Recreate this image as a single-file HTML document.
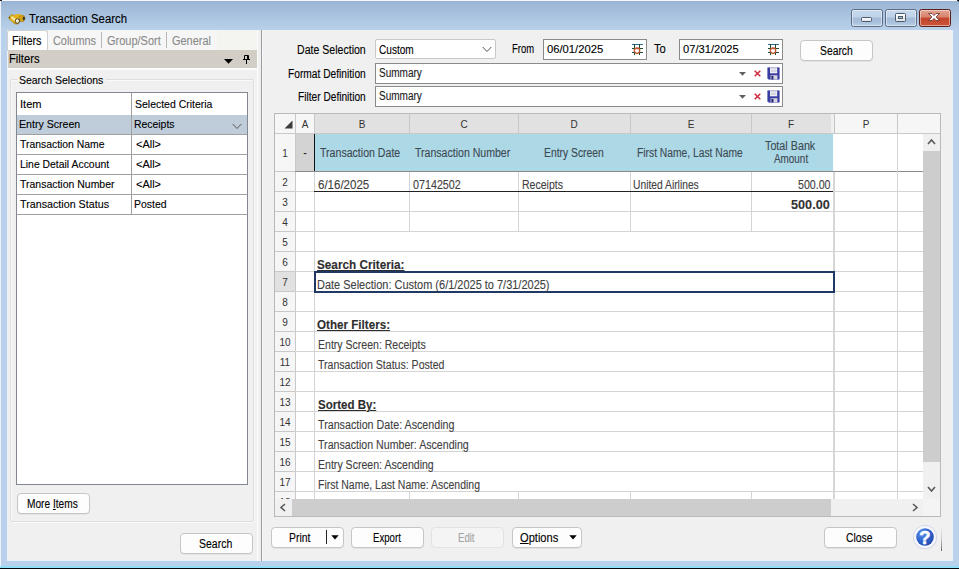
<!DOCTYPE html><html><head><meta charset="utf-8"><title>Transaction Search</title><style>html,body{margin:0;padding:0;}
body{width:959px;height:569px;position:relative;overflow:hidden;background:#bfd3ec;font-family:"Liberation Sans", sans-serif;}
#w div{position:absolute;}
.t u{text-decoration:underline;text-decoration-thickness:1px;text-underline-offset:1px;}
.p{display:inline-block;width:0;height:0;vertical-align:baseline;}
.t{-webkit-text-stroke:0.12px currentColor;position:absolute;white-space:pre;line-height:20px;height:20px;transform-origin:0 50%;font-family:"Liberation Sans", sans-serif;}
</style></head><body><div id="w"><div class="" style="left:0px;top:0px;width:959px;height:569px;background:linear-gradient(#9ab5d4 1px,#b9d1ea 30px,#b9d1ea 100%);"></div>
<div class="" style="left:0px;top:0px;width:959px;height:1px;background:#f4f8fc;"></div>
<div class="" style="left:0px;top:0px;width:2px;height:1px;background:#1a2028;"></div>
<div class="" style="left:0px;top:1px;width:1px;height:1px;background:#4a5868;"></div>
<div class="" style="left:957px;top:0px;width:2px;height:1px;background:#1a2028;"></div>
<div class="" style="left:958px;top:1px;width:1px;height:1px;background:#4a5868;"></div>
<div class="" style="left:0px;top:1px;width:1px;height:565px;background:#eef4fb;"></div>
<div class="" style="left:0px;top:566px;width:959px;height:2px;background:#8fe0f8;"></div>
<div class="" style="left:0px;top:568px;width:959px;height:1px;background:#05080a;"></div>
<div class="" style="left:7px;top:30px;width:946px;height:531px;background:#f0f0f0;box-shadow:inset 1px 0 0 #eaf2fb, inset -1px -1px 0 #eaf2fb;"></div>
<svg style="position:absolute;left:8px;top:13px" width="18" height="12" viewBox="0 0 18 12">
<path d="M0.8 4 L3.8 1.3 L12 7 L9.5 11.2 L6.2 10.6 L1 5.8 Z" fill="#e2ae1c" stroke="#a67c12" stroke-width="0.6"/>
<path d="M2.4 4.2 L4.6 3.2 L8.6 6.6 L6.6 8.6 Z" fill="#f8e89a"/>
<ellipse cx="10.2" cy="3.3" rx="4.4" ry="2.2" fill="#e6b21a"/>
<path d="M11 3.2 L16 2.4 L17.2 5.4 L15.2 8.8 L12.2 8.2 Z" fill="#d9a414" stroke="#9a7410" stroke-width="0.5"/>
<ellipse cx="15.8" cy="5.6" rx="1.1" ry="2" fill="#3b3a22"/>
<circle cx="9.4" cy="8.1" r="2.3" fill="#d9dbc9" stroke="#5a4810" stroke-width="1"/>
<circle cx="8.9" cy="7.6" r="0.9" fill="#fff"/>
<circle cx="1.6" cy="4.6" r="0.8" fill="#6a5210"/>
</svg>
<div class="" style="left:851px;top:9px;width:32px;height:18px;background:linear-gradient(#c6d8ec 0%,#bfd2e8 45%,#a3bbd7 50%,#a8c0dc 75%,#b9cfe6 100%);border:1px solid #5d6d86;border-radius:2.5px;box-sizing:border-box;box-shadow:inset 0 0 0 1px rgba(255,255,255,.45);"></div>
<div class="" style="left:885px;top:9px;width:32px;height:18px;background:linear-gradient(#c6d8ec 0%,#bfd2e8 45%,#a3bbd7 50%,#a8c0dc 75%,#b9cfe6 100%);border:1px solid #5d6d86;border-radius:2.5px;box-sizing:border-box;box-shadow:inset 0 0 0 1px rgba(255,255,255,.45);"></div>
<div class="" style="left:919px;top:9px;width:32px;height:18px;background:linear-gradient(#e3a594 0%,#d6806a 45%,#c4452a 50%,#c9553a 100%);border:1px solid #5a2018;border-radius:2.5px;box-sizing:border-box;box-shadow:inset 0 0 0 1px rgba(255,255,255,.45);"></div>
<div class="" style="left:861px;top:17px;width:11px;height:5px;background:linear-gradient(#fff,#dfe3e8);border:1px solid #4d5a6a;box-sizing:border-box;border-radius:1.5px;"></div>
<div class="" style="left:895px;top:13px;width:11px;height:9px;background:linear-gradient(#fff,#dfe3e8);border:1px solid #4d5a6a;box-sizing:border-box;border-radius:1.5px;"></div>
<div class="" style="left:898px;top:16px;width:5px;height:3px;background:#a9c1de;border:1px solid #4d5a6a;box-sizing:border-box;"></div>
<svg style="position:absolute;left:928px;top:12.5px" width="12" height="8" viewBox="0 0 12 8">
<path d="M0.5 0.5 L4 0.5 L6 2.5 L8 0.5 L11.5 0.5 L8.1 4 L11.5 7.5 L8 7.5 L6 5.5 L4 7.5 L0.5 7.5 L3.9 4 Z" fill="#fcfcfc" stroke="#6a3028" stroke-width="0.8" stroke-linejoin="round"/></svg>
<div class="" style="left:8px;top:30px;width:249px;height:20px;background:#f4f4f0;"></div>
<div class="" style="left:48px;top:30px;width:169px;height:20px;background:#f6f6f6;"></div>
<div class="" style="left:7px;top:30px;width:41px;height:21px;background:#fff;border:1px solid #d0d0d0;border-bottom:none;border-radius:3px 3px 0 0;box-sizing:border-box;"></div>
<div class="" style="left:101px;top:32px;width:1px;height:16px;background:#b8b8b8;"></div>
<div class="" style="left:166px;top:32px;width:1px;height:16px;background:#b8b8b8;"></div>
<div class="" style="left:8px;top:50px;width:249px;height:18px;background:#d2cec5;"></div>
<div class="" style="left:8px;top:68px;width:249px;height:2px;background:#fbfbfb;"></div>
<svg style="position:absolute;left:224px;top:59px" width="9" height="5" viewBox="0 0 9 5"><path d="M0 0 L9 0 L4.5 4.8 Z" fill="#000"/></svg>
<svg style="position:absolute;left:243px;top:55px" width="7" height="9" viewBox="0 0 7 9">
<path d="M1.5 0.5 H5.5 V4.5 H1.5 Z" fill="none" stroke="#000" stroke-width="1"/><path d="M4.5 0.5V4.5" stroke="#000" stroke-width="1"/>
<path d="M0 4.5 H7" stroke="#000" stroke-width="1"/><path d="M3.5 5 V9" stroke="#000" stroke-width="1"/></svg>
<div class="" style="left:257px;top:30px;width:1px;height:531px;background:#fcfcfc;"></div>
<div class="" style="left:261px;top:30px;width:1px;height:531px;background:#9c9c9c;"></div>
<div class="" style="left:262px;top:30px;width:1px;height:531px;background:#f7f7f7;"></div>
<div class="" style="left:10px;top:79px;width:244px;height:443px;border:1px solid #dddddd;box-sizing:border-box;border-radius:2px;box-shadow:inset 1px 1px 0 #fafafa, 1px 1px 0 #fafafa;"></div>
<div class="" style="left:17px;top:72px;width:89px;height:14px;background:#f0f0f0;"></div>
<div class="" style="left:16px;top:92px;width:232px;height:393px;background:#fff;border:1px solid #828790;box-sizing:border-box;"></div>
<div class="" style="left:17px;top:115px;width:230px;height:19px;background:#bfcddb;"></div>
<div class="" style="left:17px;top:134px;width:230px;height:1px;background:#a0a0a0;"></div>
<div class="" style="left:17px;top:154px;width:230px;height:1px;background:#a0a0a0;"></div>
<div class="" style="left:17px;top:174px;width:230px;height:1px;background:#a0a0a0;"></div>
<div class="" style="left:17px;top:194px;width:230px;height:1px;background:#a0a0a0;"></div>
<div class="" style="left:17px;top:214px;width:230px;height:1px;background:#a0a0a0;"></div>
<div class="" style="left:131px;top:93px;width:1px;height:121px;background:#a0a0a0;"></div>
<svg style="position:absolute;left:232px;top:123px" width="10" height="7" viewBox="0 0 10 7"><path d="M0.7 1 L5 5.5 L9.3 1" fill="none" stroke="#555" stroke-width="1"/></svg>
<div class="" style="left:17px;top:493px;width:73px;height:21px;background:#fdfdfd;border:1px solid #c6c6c6;border-radius:4px;box-sizing:border-box;box-shadow:0 1px 0 rgba(0,0,0,.05);"></div>
<div class="" style="left:180px;top:533px;width:73px;height:21px;background:#fdfdfd;border:1px solid #c6c6c6;border-radius:4px;box-sizing:border-box;box-shadow:0 1px 0 rgba(0,0,0,.05);"></div>
<div class="" style="left:375px;top:39px;width:121px;height:20px;background:#fff;border:1px solid #c8c8c8;border-radius:2px;box-sizing:border-box;"></div>
<svg style="position:absolute;left:482px;top:46px" width="10" height="7" viewBox="0 0 10 7"><path d="M0.7 1 L5 5.5 L9.3 1" fill="none" stroke="#555" stroke-width="1"/></svg>
<div class="" style="left:543px;top:39px;width:104px;height:21px;background:#fff;border:1px solid #8a8a8a;box-sizing:border-box;"></div>
<svg style="position:absolute;left:632px;top:44px" width="11" height="11" viewBox="0 0 11 11">
<path d="M0 0.5H11" stroke="#2a6a9a" stroke-width="1"/>
<path d="M2.5 0V11M7.5 0V11" stroke="#1e4a2e" stroke-width="1"/>
<path d="M0 4.5H11M0 8.5H11" stroke="#1e4a2e" stroke-width="1"/>
<circle cx="5" cy="6.6" r="2.7" fill="#fff" stroke="#c0522c" stroke-width="1.3"/>
<path d="M3 5.2 Q5 2.2 7 5.2 Z" fill="#cf5a3a"/></svg>
<div class="" style="left:679px;top:39px;width:104px;height:21px;background:#fff;border:1px solid #8a8a8a;box-sizing:border-box;"></div>
<svg style="position:absolute;left:768px;top:44px" width="11" height="11" viewBox="0 0 11 11">
<path d="M0 0.5H11" stroke="#2a6a9a" stroke-width="1"/>
<path d="M2.5 0V11M7.5 0V11" stroke="#1e4a2e" stroke-width="1"/>
<path d="M0 4.5H11M0 8.5H11" stroke="#1e4a2e" stroke-width="1"/>
<circle cx="5" cy="6.6" r="2.7" fill="#fff" stroke="#c0522c" stroke-width="1.3"/>
<path d="M3 5.2 Q5 2.2 7 5.2 Z" fill="#cf5a3a"/></svg>
<div class="" style="left:800px;top:40px;width:73px;height:21px;background:#fdfdfd;border:1px solid #c6c6c6;border-radius:4px;box-sizing:border-box;box-shadow:0 1px 0 rgba(0,0,0,.05);"></div>
<div class="" style="left:375px;top:63px;width:408px;height:21px;background:#fff;border:1px solid #8a8a8a;box-sizing:border-box;"></div>
<svg style="position:absolute;left:739px;top:72px" width="7" height="4" viewBox="0 0 7 4"><path d="M0 0 L7 0 L3.5 3.8 Z" fill="#606060"/></svg>
<svg style="position:absolute;left:754px;top:70px" width="7" height="7" viewBox="0 0 7 7"><path d="M0.7 0.7 L6.3 6.3 M6.3 0.7 L0.7 6.3" stroke="#cf2a3e" stroke-width="1.5"/></svg>
<svg style="position:absolute;left:767px;top:67px" width="13" height="13" viewBox="0 0 13 13">
<path d="M1.2 0.5 H11.8 Q12.5 0.5 12.5 1.2 V11.8 Q12.5 12.5 11.8 12.5 H1.8 L0.5 11.2 V1.2 Q0.5 0.5 1.2 0.5 Z" fill="#3a3ca4" stroke="#7a7cc8" stroke-width="0.6"/>
<rect x="3" y="0.5" width="7.2" height="5.8" fill="#f2f2f8"/>
<path d="M3.6 1.8H9.6M3.6 3.2H9.6M3.6 4.6H9.6" stroke="#b8b8c4" stroke-width="0.6"/>
<rect x="3.6" y="8.2" width="6.8" height="4.3" fill="#d4d4de"/><rect x="4.4" y="8.8" width="2" height="3.7" fill="#23266e"/></svg>
<div class="" style="left:375px;top:86px;width:408px;height:21px;background:#fff;border:1px solid #8a8a8a;box-sizing:border-box;"></div>
<svg style="position:absolute;left:739px;top:95px" width="7" height="4" viewBox="0 0 7 4"><path d="M0 0 L7 0 L3.5 3.8 Z" fill="#606060"/></svg>
<svg style="position:absolute;left:754px;top:93px" width="7" height="7" viewBox="0 0 7 7"><path d="M0.7 0.7 L6.3 6.3 M6.3 0.7 L0.7 6.3" stroke="#cf2a3e" stroke-width="1.5"/></svg>
<svg style="position:absolute;left:767px;top:90px" width="13" height="13" viewBox="0 0 13 13">
<path d="M1.2 0.5 H11.8 Q12.5 0.5 12.5 1.2 V11.8 Q12.5 12.5 11.8 12.5 H1.8 L0.5 11.2 V1.2 Q0.5 0.5 1.2 0.5 Z" fill="#3a3ca4" stroke="#7a7cc8" stroke-width="0.6"/>
<rect x="3" y="0.5" width="7.2" height="5.8" fill="#f2f2f8"/>
<path d="M3.6 1.8H9.6M3.6 3.2H9.6M3.6 4.6H9.6" stroke="#b8b8c4" stroke-width="0.6"/>
<rect x="3.6" y="8.2" width="6.8" height="4.3" fill="#d4d4de"/><rect x="4.4" y="8.8" width="2" height="3.7" fill="#23266e"/></svg>
<div class="" style="left:274px;top:113px;width:667px;height:404px;background:#fff;border:1px solid #b9b9b9;box-sizing:border-box;"></div>
<div class="" style="left:275px;top:114px;width:664.5px;height:19px;background:#f6f6f6;"></div>
<div class="" style="left:275px;top:114px;width:20px;height:19px;background:#f6f6f6;"></div>
<div class="" style="left:295.5px;top:114px;width:18.5px;height:19px;background:#f6f6f6;"></div>
<div class="" style="left:314.5px;top:114px;width:94.0px;height:19px;background:#e1e1e1;"></div>
<div class="" style="left:409px;top:114px;width:109px;height:19px;background:#e1e1e1;"></div>
<div class="" style="left:518.5px;top:114px;width:111.5px;height:19px;background:#e1e1e1;"></div>
<div class="" style="left:630.5px;top:114px;width:120.0px;height:19px;background:#e1e1e1;"></div>
<div class="" style="left:751px;top:114px;width:80px;height:19px;background:#e1e1e1;"></div>
<div class="" style="left:835px;top:114px;width:62px;height:19px;background:#f6f6f6;"></div>
<div class="" style="left:898px;top:114px;width:42px;height:19px;background:#f6f6f6;"></div>
<div class="" style="left:295px;top:114px;width:1px;height:19px;background:#c9c9c9;"></div>
<div class="" style="left:314px;top:114px;width:1px;height:19px;background:#c9c9c9;"></div>
<div class="" style="left:408.5px;top:114px;width:1px;height:19px;background:#c9c9c9;"></div>
<div class="" style="left:518px;top:114px;width:1px;height:19px;background:#c9c9c9;"></div>
<div class="" style="left:630px;top:114px;width:1px;height:19px;background:#c9c9c9;"></div>
<div class="" style="left:750.5px;top:114px;width:1px;height:19px;background:#c9c9c9;"></div>
<div class="" style="left:897px;top:114px;width:1px;height:19px;background:#c9c9c9;"></div>
<div class="" style="left:275px;top:133px;width:664.5px;height:1px;background:#c9c9c9;"></div>
<svg style="position:absolute;left:284px;top:120px" width="9" height="9" viewBox="0 0 9 9"><path d="M8.5 0.5 V8.5 H0.5 Z" fill="#3c3c3c"/></svg>
<div class="" style="left:275px;top:134px;width:20px;height:365px;background:#f6f6f6;"></div>
<div class="" style="left:275px;top:271.5px;width:20px;height:20px;background:#e1e1e1;"></div>
<div class="" style="left:295px;top:134px;width:1px;height:365px;background:#c9c9c9;"></div>
<div class="" style="left:295.5px;top:134px;width:18.5px;height:37px;background:#d3d3d3;"></div>
<div class="" style="left:314px;top:134px;width:519px;height:37px;background:#add8e6;"></div>
<div class="" style="left:314px;top:134px;width:1px;height:37px;background:#111;"></div>
<div class="" style="left:314px;top:171px;width:1px;height:328px;background:#d4d4d4;"></div>
<div class="" style="left:275px;top:191px;width:648px;height:1px;background:#d4d4d4;"></div>
<div class="" style="left:275px;top:211px;width:648px;height:1px;background:#d4d4d4;"></div>
<div class="" style="left:275px;top:231px;width:648px;height:1px;background:#d4d4d4;"></div>
<div class="" style="left:275px;top:251px;width:648px;height:1px;background:#d4d4d4;"></div>
<div class="" style="left:275px;top:271px;width:648px;height:1px;background:#d4d4d4;"></div>
<div class="" style="left:275px;top:291px;width:648px;height:1px;background:#d4d4d4;"></div>
<div class="" style="left:275px;top:311px;width:648px;height:1px;background:#d4d4d4;"></div>
<div class="" style="left:275px;top:331px;width:648px;height:1px;background:#d4d4d4;"></div>
<div class="" style="left:275px;top:351px;width:648px;height:1px;background:#d4d4d4;"></div>
<div class="" style="left:275px;top:371px;width:648px;height:1px;background:#d4d4d4;"></div>
<div class="" style="left:275px;top:391px;width:648px;height:1px;background:#d4d4d4;"></div>
<div class="" style="left:275px;top:411px;width:648px;height:1px;background:#d4d4d4;"></div>
<div class="" style="left:275px;top:431px;width:648px;height:1px;background:#d4d4d4;"></div>
<div class="" style="left:275px;top:451px;width:648px;height:1px;background:#d4d4d4;"></div>
<div class="" style="left:275px;top:471px;width:648px;height:1px;background:#d4d4d4;"></div>
<div class="" style="left:275px;top:491px;width:648px;height:1px;background:#d4d4d4;"></div>
<div class="" style="left:275px;top:171px;width:20px;height:1px;background:#c9c9c9;"></div>
<div class="" style="left:275px;top:191px;width:20px;height:1px;background:#c9c9c9;"></div>
<div class="" style="left:275px;top:211px;width:20px;height:1px;background:#c9c9c9;"></div>
<div class="" style="left:275px;top:231px;width:20px;height:1px;background:#c9c9c9;"></div>
<div class="" style="left:275px;top:251px;width:20px;height:1px;background:#c9c9c9;"></div>
<div class="" style="left:275px;top:271px;width:20px;height:1px;background:#c9c9c9;"></div>
<div class="" style="left:275px;top:291px;width:20px;height:1px;background:#c9c9c9;"></div>
<div class="" style="left:275px;top:311px;width:20px;height:1px;background:#c9c9c9;"></div>
<div class="" style="left:275px;top:331px;width:20px;height:1px;background:#c9c9c9;"></div>
<div class="" style="left:275px;top:351px;width:20px;height:1px;background:#c9c9c9;"></div>
<div class="" style="left:275px;top:371px;width:20px;height:1px;background:#c9c9c9;"></div>
<div class="" style="left:275px;top:391px;width:20px;height:1px;background:#c9c9c9;"></div>
<div class="" style="left:275px;top:411px;width:20px;height:1px;background:#c9c9c9;"></div>
<div class="" style="left:275px;top:431px;width:20px;height:1px;background:#c9c9c9;"></div>
<div class="" style="left:275px;top:451px;width:20px;height:1px;background:#c9c9c9;"></div>
<div class="" style="left:275px;top:471px;width:20px;height:1px;background:#c9c9c9;"></div>
<div class="" style="left:275px;top:491px;width:20px;height:1px;background:#c9c9c9;"></div>
<div class="" style="left:295px;top:171px;width:628px;height:1px;background:#8a8a8a;"></div>
<div class="" style="left:408.5px;top:172px;width:1px;height:59px;background:#d4d4d4;"></div>
<div class="" style="left:408.5px;top:492px;width:1px;height:7px;background:#d4d4d4;"></div>
<div class="" style="left:518px;top:172px;width:1px;height:59px;background:#d4d4d4;"></div>
<div class="" style="left:518px;top:492px;width:1px;height:7px;background:#d4d4d4;"></div>
<div class="" style="left:630px;top:172px;width:1px;height:59px;background:#d4d4d4;"></div>
<div class="" style="left:630px;top:492px;width:1px;height:7px;background:#d4d4d4;"></div>
<div class="" style="left:750.5px;top:172px;width:1px;height:59px;background:#d4d4d4;"></div>
<div class="" style="left:750.5px;top:492px;width:1px;height:7px;background:#d4d4d4;"></div>
<div class="" style="left:314px;top:191px;width:519px;height:1px;background:#222;"></div>
<div class="" style="left:833px;top:172px;width:2px;height:327px;background:#d6d6d6;"></div>
<div class="" style="left:831px;top:114px;width:3px;height:19px;background:#f0f0f0;"></div>
<div class="" style="left:834px;top:114px;width:1px;height:19px;background:#c4c4c4;"></div>
<div class="" style="left:897px;top:134px;width:1px;height:365px;background:#d4d4d4;"></div>
<div class="" style="left:313.5px;top:270.5px;width:521px;height:22px;border:2px solid #1f3864;box-sizing:border-box;background:#fff;"></div>
<div class="" style="left:923px;top:134px;width:17px;height:365px;background:#f0f0f0;"></div>
<div class="" style="left:923px;top:151px;width:17px;height:311px;background:#cdcdcd;"></div>
<div class="" style="left:275px;top:499px;width:665px;height:17px;background:#f0f0f0;"></div>
<div class="" style="left:292px;top:499px;width:538.5px;height:17px;background:#cdcdcd;"></div>
<div class="" style="left:923px;top:499px;width:17px;height:17px;background:#f4f4f4;"></div>
<svg style="position:absolute;left:927px;top:138px" width="9" height="9" viewBox="0 0 9 9"><path d="M1 6 L4.5 2 L8 6" fill="none" stroke="#5a5a5a" stroke-width="1.6"/></svg>
<svg style="position:absolute;left:927px;top:485px" width="9" height="9" viewBox="0 0 9 9"><path d="M1 2 L4.5 6 L8 2" fill="none" stroke="#5a5a5a" stroke-width="1.6"/></svg>
<svg style="position:absolute;left:279px;top:503px" width="9" height="9" viewBox="0 0 9 9"><path d="M6 1 L2 4.5 L6 8" fill="none" stroke="#5a5a5a" stroke-width="1.6"/></svg>
<svg style="position:absolute;left:911px;top:503px" width="9" height="9" viewBox="0 0 9 9"><path d="M2 1 L6 4.5 L2 8" fill="none" stroke="#5a5a5a" stroke-width="1.6"/></svg>
<div class="" style="left:271px;top:527px;width:73px;height:21px;background:#fdfdfd;border:1px solid #c6c6c6;border-radius:4px;box-sizing:border-box;box-shadow:0 1px 0 rgba(0,0,0,.05);"></div>
<div class="" style="left:326px;top:530px;width:1px;height:14px;background:#222;"></div>
<svg style="position:absolute;left:330.5px;top:535px" width="8" height="5" viewBox="0 0 8 5"><path d="M0.3 0.3 L7.7 0.3 L4 4.6 Z" fill="#000"/></svg>
<div class="" style="left:351px;top:527px;width:73px;height:21px;background:#fdfdfd;border:1px solid #c6c6c6;border-radius:4px;box-sizing:border-box;box-shadow:0 1px 0 rgba(0,0,0,.05);"></div>
<div class="" style="left:431px;top:527px;width:73px;height:21px;background:#f4f4f4;border:1px solid #e2e2e2;border-radius:4px;box-sizing:border-box;"></div>
<div class="" style="left:512px;top:527px;width:70px;height:21px;background:#fdfdfd;border:1px solid #c6c6c6;border-radius:4px;box-sizing:border-box;box-shadow:0 1px 0 rgba(0,0,0,.05);"></div>
<svg style="position:absolute;left:568.5px;top:535px" width="8" height="5" viewBox="0 0 8 5"><path d="M0.3 0.3 L7.7 0.3 L4 4.6 Z" fill="#000"/></svg>
<div class="" style="left:824px;top:527px;width:73px;height:21px;background:#fdfdfd;border:1px solid #c6c6c6;border-radius:4px;box-sizing:border-box;box-shadow:0 1px 0 rgba(0,0,0,.05);"></div>
<svg style="position:absolute;left:911px;top:523px" width="28" height="28" viewBox="0 0 28 28">
<defs><radialGradient id="hg" cx="35%" cy="30%" r="80%"><stop offset="0" stop-color="#5f93ea"/><stop offset="0.55" stop-color="#2f62cc"/><stop offset="1" stop-color="#1f47a6"/></radialGradient></defs>
<circle cx="14.3" cy="14.5" r="12" fill="#dfe2ec"/>
<circle cx="14" cy="14" r="11.6" fill="#f6f8fd" stroke="#cdd3e4" stroke-width="0.8"/>
<circle cx="14" cy="14" r="8.8" fill="url(#hg)"/>
<text x="14" y="20.6" text-anchor="middle" font-family="Liberation Sans, sans-serif" font-weight="700" font-size="18.5" fill="#fff" stroke="#fff" stroke-width="0.5">?</text></svg>
<div class="" style="left:941px;top:525px;width:1px;height:26px;background:linear-gradient(rgba(120,120,120,0),rgba(110,110,110,.25) 50%,rgba(90,90,90,.9));"></div>
<span id="t0" class="t" style="font-size:12.5px;font-weight:400;color:#000;top:9.00px;left:29.40px;transform:scaleX(0.9076);">Transaction Search</span>
<span id="t1" class="t" style="font-size:12.5px;font-weight:400;color:#000;top:31.00px;left:12.00px;transform:scaleX(0.8673);">Filters</span>
<span id="t2" class="t" style="font-size:12.5px;font-weight:400;color:#8a8a8a;top:31.00px;left:53.00px;transform:scaleX(0.8717);">Columns</span>
<span id="t3" class="t" style="font-size:12.5px;font-weight:400;color:#8a8a8a;top:31.00px;left:107.00px;transform:scaleX(0.8792);">Group/Sort</span>
<span id="t4" class="t" style="font-size:12.5px;font-weight:400;color:#8a8a8a;top:31.00px;left:172.00px;transform:scaleX(0.8767);">General</span>
<span id="t5" class="t" style="font-size:12.5px;font-weight:400;color:#000;top:49.00px;left:9.00px;transform:scaleX(0.8967);">Filters</span>
<span id="t6" class="t" style="font-size:11.6px;font-weight:400;color:#000;top:70.00px;left:19.00px;transform:scaleX(0.9016);">Search Selections</span>
<span id="t7" class="t" style="font-size:11.6px;font-weight:400;color:#000;top:94.00px;left:20.00px;transform:scaleX(0.9538);">Item</span>
<span id="t8" class="t" style="font-size:11.6px;font-weight:400;color:#000;top:94.00px;left:135.00px;transform:scaleX(0.9027);">Selected Criteria</span>
<span id="t9" class="t" style="font-size:11.6px;font-weight:400;color:#000;top:114.00px;left:19.00px;transform:scaleX(0.9140);">Entry Screen</span>
<span id="t10" class="t" style="font-size:11.6px;font-weight:400;color:#000;top:114.00px;left:134.00px;transform:scaleX(0.8981);">Receipts</span>
<span id="t11" class="t" style="font-size:11.6px;font-weight:400;color:#000;top:134.00px;left:20.00px;transform:scaleX(0.8962);">Transaction Name</span>
<span id="t12" class="t" style="font-size:11.6px;font-weight:400;color:#000;top:134.00px;left:135.50px;transform:scaleX(0.9456);">&lt;All&gt;</span>
<span id="t13" class="t" style="font-size:11.6px;font-weight:400;color:#000;top:154.00px;left:20.00px;transform:scaleX(0.8977);">Line Detail Account</span>
<span id="t14" class="t" style="font-size:11.6px;font-weight:400;color:#000;top:154.00px;left:135.50px;transform:scaleX(0.9456);">&lt;All&gt;</span>
<span id="t15" class="t" style="font-size:11.6px;font-weight:400;color:#000;top:174.00px;left:20.00px;transform:scaleX(0.9034);">Transaction Number</span>
<span id="t16" class="t" style="font-size:11.6px;font-weight:400;color:#000;top:174.00px;left:135.50px;transform:scaleX(0.9456);">&lt;All&gt;</span>
<span id="t17" class="t" style="font-size:11.6px;font-weight:400;color:#000;top:194.00px;left:20.00px;transform:scaleX(0.9248);">Transaction Status</span>
<span id="t18" class="t" style="font-size:11.6px;font-weight:400;color:#000;top:194.00px;left:134.00px;transform:scaleX(0.9004);">Posted</span>
<span id="t19" class="t" style="font-size:12.5px;font-weight:400;color:#000;top:494.00px;left:27.00px;transform:scaleX(0.8117);">More <u>I</u>tems</span>
<span id="t20" class="t" style="font-size:12.5px;font-weight:400;color:#000;top:534.00px;left:198.50px;transform:scaleX(0.8397);">Search</span>
<span id="t21" class="t" style="font-size:12.5px;font-weight:400;color:#000;top:40.00px;left:297.00px;transform:scaleX(0.8456);">Date Selection</span>
<span id="t22" class="t" style="font-size:12.5px;font-weight:400;color:#000;top:64.00px;left:288.00px;transform:scaleX(0.8169);">Format Definition</span>
<span id="t23" class="t" style="font-size:12.5px;font-weight:400;color:#000;top:87.00px;left:298.00px;transform:scaleX(0.8127);">Filter Definition</span>
<span id="t24" class="t" style="font-size:12.5px;font-weight:400;color:#000;top:40.00px;left:378.50px;transform:scaleX(0.8069);">Custom</span>
<span id="t25" class="t" style="font-size:12.5px;font-weight:400;color:#000;top:39.00px;left:512.00px;transform:scaleX(0.7542);">From</span>
<span id="t26" class="t" style="font-size:12.5px;font-weight:400;color:#000;top:39.00px;left:654.00px;transform:scaleX(0.8922);">To</span>
<span id="t27" class="t" style="font-size:11.6px;font-weight:400;color:#000;top:39.00px;left:546.50px;transform:scaleX(0.9694);">06/01/2025</span>
<span id="t28" class="t" style="font-size:11.6px;font-weight:400;color:#000;top:39.00px;left:683.00px;transform:scaleX(0.9608);">07/31/2025</span>
<span id="t29" class="t" style="font-size:12.5px;font-weight:400;color:#000;top:41.00px;left:819.50px;transform:scaleX(0.8271);">Search</span>
<span id="t30" class="t" style="font-size:12.5px;font-weight:400;color:#222;top:63.00px;left:378.50px;transform:scaleX(0.8014);">Summary</span>
<span id="t31" class="t" style="font-size:12.5px;font-weight:400;color:#222;top:86.00px;left:378.50px;transform:scaleX(0.8014);">Summary</span>
<span id="t32" class="t" style="font-size:11.6px;font-weight:400;color:#333;top:114.00px;left:254.75px;width:100px;text-align:center;-webkit-text-stroke:0;transform:scaleX(0.86);transform-origin:50% 50%;">A</span>
<span id="t33" class="t" style="font-size:11.6px;font-weight:400;color:#333;top:114.00px;left:311.5px;width:100px;text-align:center;-webkit-text-stroke:0;transform:scaleX(0.86);transform-origin:50% 50%;">B</span>
<span id="t34" class="t" style="font-size:11.6px;font-weight:400;color:#333;top:114.00px;left:413.5px;width:100px;text-align:center;-webkit-text-stroke:0;transform:scaleX(0.86);transform-origin:50% 50%;">C</span>
<span id="t35" class="t" style="font-size:11.6px;font-weight:400;color:#333;top:114.00px;left:524.25px;width:100px;text-align:center;-webkit-text-stroke:0;transform:scaleX(0.86);transform-origin:50% 50%;">D</span>
<span id="t36" class="t" style="font-size:11.6px;font-weight:400;color:#333;top:114.00px;left:640.5px;width:100px;text-align:center;-webkit-text-stroke:0;transform:scaleX(0.86);transform-origin:50% 50%;">E</span>
<span id="t37" class="t" style="font-size:11.6px;font-weight:400;color:#333;top:114.00px;left:741.0px;width:100px;text-align:center;-webkit-text-stroke:0;transform:scaleX(0.86);transform-origin:50% 50%;">F</span>
<span id="t38" class="t" style="font-size:11.6px;font-weight:400;color:#333;top:114.00px;left:816.0px;width:100px;text-align:center;-webkit-text-stroke:0;transform:scaleX(0.86);transform-origin:50% 50%;">P</span>
<span id="t39" class="t" style="font-size:11.6px;font-weight:400;color:#333;top:143.00px;left:234.75px;width:100px;text-align:center;-webkit-text-stroke:0;transform:scaleX(0.86);transform-origin:50% 50%;">1</span>
<span id="t40" class="t" style="font-size:11.6px;font-weight:400;color:#333;top:172.00px;left:234.75px;width:100px;text-align:center;-webkit-text-stroke:0;transform:scaleX(0.86);transform-origin:50% 50%;">2</span>
<span id="t41" class="t" style="font-size:11.6px;font-weight:400;color:#333;top:192.00px;left:234.75px;width:100px;text-align:center;-webkit-text-stroke:0;transform:scaleX(0.86);transform-origin:50% 50%;">3</span>
<span id="t42" class="t" style="font-size:11.6px;font-weight:400;color:#333;top:212.00px;left:234.75px;width:100px;text-align:center;-webkit-text-stroke:0;transform:scaleX(0.86);transform-origin:50% 50%;">4</span>
<span id="t43" class="t" style="font-size:11.6px;font-weight:400;color:#333;top:232.00px;left:234.75px;width:100px;text-align:center;-webkit-text-stroke:0;transform:scaleX(0.86);transform-origin:50% 50%;">5</span>
<span id="t44" class="t" style="font-size:11.6px;font-weight:400;color:#333;top:252.00px;left:234.75px;width:100px;text-align:center;-webkit-text-stroke:0;transform:scaleX(0.86);transform-origin:50% 50%;">6</span>
<span id="t45" class="t" style="font-size:11.6px;font-weight:400;color:#333;top:272.00px;left:234.75px;width:100px;text-align:center;-webkit-text-stroke:0;transform:scaleX(0.86);transform-origin:50% 50%;">7</span>
<span id="t46" class="t" style="font-size:11.6px;font-weight:400;color:#333;top:292.00px;left:234.75px;width:100px;text-align:center;-webkit-text-stroke:0;transform:scaleX(0.86);transform-origin:50% 50%;">8</span>
<span id="t47" class="t" style="font-size:11.6px;font-weight:400;color:#333;top:312.00px;left:234.75px;width:100px;text-align:center;-webkit-text-stroke:0;transform:scaleX(0.86);transform-origin:50% 50%;">9</span>
<span id="t48" class="t" style="font-size:11.6px;font-weight:400;color:#333;top:332.00px;left:234.75px;width:100px;text-align:center;-webkit-text-stroke:0;transform:scaleX(0.86);transform-origin:50% 50%;">10</span>
<span id="t49" class="t" style="font-size:11.6px;font-weight:400;color:#333;top:352.00px;left:234.75px;width:100px;text-align:center;-webkit-text-stroke:0;transform:scaleX(0.86);transform-origin:50% 50%;">11</span>
<span id="t50" class="t" style="font-size:11.6px;font-weight:400;color:#333;top:372.00px;left:234.75px;width:100px;text-align:center;-webkit-text-stroke:0;transform:scaleX(0.86);transform-origin:50% 50%;">12</span>
<span id="t51" class="t" style="font-size:11.6px;font-weight:400;color:#333;top:392.00px;left:234.75px;width:100px;text-align:center;-webkit-text-stroke:0;transform:scaleX(0.86);transform-origin:50% 50%;">13</span>
<span id="t52" class="t" style="font-size:11.6px;font-weight:400;color:#333;top:412.00px;left:234.75px;width:100px;text-align:center;-webkit-text-stroke:0;transform:scaleX(0.86);transform-origin:50% 50%;">14</span>
<span id="t53" class="t" style="font-size:11.6px;font-weight:400;color:#333;top:432.00px;left:234.75px;width:100px;text-align:center;-webkit-text-stroke:0;transform:scaleX(0.86);transform-origin:50% 50%;">15</span>
<span id="t54" class="t" style="font-size:11.6px;font-weight:400;color:#333;top:452.00px;left:234.75px;width:100px;text-align:center;-webkit-text-stroke:0;transform:scaleX(0.86);transform-origin:50% 50%;">16</span>
<span id="t55" class="t" style="font-size:11.6px;font-weight:400;color:#333;top:472.00px;left:234.75px;width:100px;text-align:center;-webkit-text-stroke:0;transform:scaleX(0.86);transform-origin:50% 50%;">17</span>
<span id="t56" class="t" style="font-size:11.6px;font-weight:400;color:#333;top:492.00px;left:234.75px;width:100px;text-align:center;-webkit-text-stroke:0;transform:scaleX(0.86);transform-origin:50% 50%;height:7.00px;overflow:hidden;">18</span>
<span id="t57" class="t" style="font-size:12.5px;font-weight:400;color:#222;top:143.00px;left:254.5px;width:100px;text-align:center;-webkit-text-stroke:0;transform:scaleX(0.86);transform-origin:50% 50%;">-</span>
<span id="t58" class="t" style="font-size:12.5px;font-weight:400;color:#3c4a52;top:143.00px;left:320.00px;transform:scaleX(0.8471);">Transaction Date</span>
<span id="t59" class="t" style="font-size:12.5px;font-weight:400;color:#3c4a52;top:143.00px;left:415.00px;transform:scaleX(0.8446);">Transaction Number</span>
<span id="t60" class="t" style="font-size:12.5px;font-weight:400;color:#3c4a52;top:143.00px;left:543.50px;transform:scaleX(0.8269);">Entry Screen</span>
<span id="t61" class="t" style="font-size:12.5px;font-weight:400;color:#3c4a52;top:143.00px;left:636.50px;transform:scaleX(0.8229);">First Name, Last Name</span>
<span id="t62" class="t" style="font-size:12.5px;font-weight:400;color:#3c4a52;top:136.00px;left:765.00px;transform:scaleX(0.8609);">Total Bank</span>
<span id="t63" class="t" style="font-size:12.5px;font-weight:400;color:#3c4a52;top:149.00px;left:773.50px;transform:scaleX(0.7924);">Amount</span>
<span id="t64" class="t" style="font-size:12.5px;font-weight:400;color:#3f3f3f;top:175.00px;left:317.50px;transform:scaleX(0.9217);">6/16/2025</span>
<span id="t65" class="t" style="font-size:12.5px;font-weight:400;color:#3f3f3f;top:175.00px;left:412.50px;transform:scaleX(0.8586);">07142502</span>
<span id="t66" class="t" style="font-size:12.5px;font-weight:400;color:#3f3f3f;top:175.00px;left:521.50px;transform:scaleX(0.8429);">Receipts</span>
<span id="t67" class="t" style="font-size:12.5px;font-weight:400;color:#3f3f3f;top:175.00px;left:633.00px;transform:scaleX(0.8229);">United Airlines</span>
<span id="t68" class="t" style="font-size:12.5px;font-weight:400;color:#3f3f3f;top:175.00px;left:797.50px;transform:scaleX(0.8504);">500.00</span>
<span id="t69" class="t" style="font-size:13.5px;font-weight:700;color:#333;top:195.00px;left:791.00px;transform:scaleX(0.9385);">500.00</span>
<span id="t70" class="t" style="font-size:13.5px;font-weight:700;color:#2e2e2e;top:255.00px;text-decoration:underline;text-decoration-thickness:1px;text-underline-offset:1px;left:317.00px;transform:scaleX(0.8703);">Search Criteria:</span>
<span id="t71" class="t" style="font-size:12.5px;font-weight:400;color:#3f3f3f;top:275.00px;left:317.00px;transform:scaleX(0.8782);">Date Selection: Custom (6/1/2025 to 7/31/2025)</span>
<span id="t72" class="t" style="font-size:13.5px;font-weight:700;color:#2e2e2e;top:315.00px;text-decoration:underline;text-decoration-thickness:1px;text-underline-offset:1px;left:316.50px;transform:scaleX(0.8612);">Other Filters:</span>
<span id="t73" class="t" style="font-size:12.5px;font-weight:400;color:#3f3f3f;top:335.00px;left:317.50px;transform:scaleX(0.8429);">Entry Screen: Receipts</span>
<span id="t74" class="t" style="font-size:12.5px;font-weight:400;color:#3f3f3f;top:355.00px;left:317.50px;transform:scaleX(0.8455);">Transaction Status: Posted</span>
<span id="t75" class="t" style="font-size:13.5px;font-weight:700;color:#2e2e2e;top:395.00px;text-decoration:underline;text-decoration-thickness:1px;text-underline-offset:1px;left:317.50px;transform:scaleX(0.8534);">Sorted By:</span>
<span id="t76" class="t" style="font-size:12.5px;font-weight:400;color:#3f3f3f;top:415.00px;left:317.50px;transform:scaleX(0.8566);">Transaction Date: Ascending</span>
<span id="t77" class="t" style="font-size:12.5px;font-weight:400;color:#3f3f3f;top:435.00px;left:317.50px;transform:scaleX(0.8498);">Transaction Number: Ascending</span>
<span id="t78" class="t" style="font-size:12.5px;font-weight:400;color:#3f3f3f;top:455.00px;left:317.50px;transform:scaleX(0.8456);">Entry Screen: Ascending</span>
<span id="t79" class="t" style="font-size:12.5px;font-weight:400;color:#3f3f3f;top:475.00px;left:317.50px;transform:scaleX(0.8388);">First Name, Last Name: Ascending</span>
<span id="t80" class="t" style="font-size:12.5px;font-weight:400;color:#000;top:528.00px;left:288.50px;transform:scaleX(0.8323);">Print</span>
<span id="t81" class="t" style="font-size:12.5px;font-weight:400;color:#000;top:528.00px;left:372.50px;transform:scaleX(0.7711);">Export</span>
<span id="t82" class="t" style="font-size:12.5px;font-weight:400;color:#a3a3a3;top:528.00px;left:458.00px;transform:scaleX(0.7670);">Edit</span>
<span id="t83" class="t" style="font-size:12.5px;font-weight:400;color:#000;top:528.00px;left:520.00px;transform:scaleX(0.8878);"><u>O</u>ptions</span>
<span id="t84" class="t" style="font-size:12.5px;font-weight:400;color:#000;top:528.00px;left:846.00px;transform:scaleX(0.8295);">Close</span>
</div></body></html>
